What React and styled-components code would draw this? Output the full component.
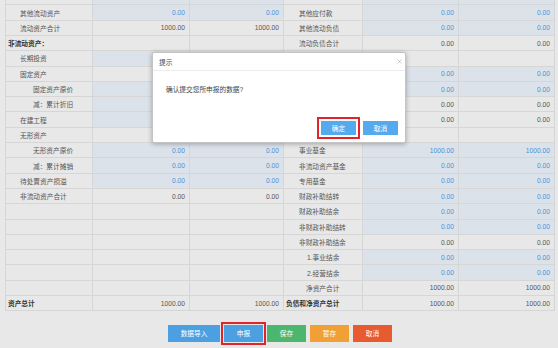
import React from 'react'
import styled, { createGlobalStyle } from 'styled-components'

const B = (v = '0.00') => ({ v, edit: true })
const G = (v = '') => ({ v, edit: false })

// [left label, left indent, bold, v1, v2, right label, right indent, bold, v3, v4]
const rows = [
  ['', 14, false, B(''), B(''), '', 15, false, B(''), B('')],
  ['其他流动资产', 14, false, B(), B(), '其他应付款', 15, false, B(), B()],
  ['流动资产合计', 14, false, G('1000.00'), G('1000.00'), '其他流动负债', 15, false, B(), B()],
  ['非流动资产：', 2, true, G(), G(), '流动负债合计', 15, false, G('0.00'), G('0.00')],
  ['长期投资', 14, false, B(''), B(''), '', 2, true, G(), G()],
  ['固定资产', 14, false, G(), G(), '', 15, false, B(), B()],
  ['固定资产原价', 27, false, B(''), B(''), '', 15, false, B(), B()],
  ['减：累计折旧', 27, false, B(''), B(''), '', 15, false, G('0.00'), G('0.00')],
  ['在建工程', 14, false, B(''), B(''), '', 15, false, G('0.00'), G('0.00')],
  ['无形资产', 14, false, G(), G(), '', 15, false, G(), G()],
  ['无形资产原价', 27, false, B(), B(), '事业基金', 15, false, B('1000.00'), B('1000.00')],
  ['减：累计摊销', 27, false, B(), B(), '非流动资产基金', 15, false, B(), B()],
  ['待处置资产损溢', 14, false, B(), B(), '专用基金', 15, false, B(), B()],
  ['非流动资产合计', 14, false, G('0.00'), G('0.00'), '财政补助结转', 15, false, B(), B()],
  ['', 14, false, G(), G(), '财政补助结余', 15, false, B(), B()],
  ['', 14, false, G(), G(), '非财政补助结转', 15, false, B(), B()],
  ['', 14, false, G(), G(), '非财政补助结余', 15, false, G('0.00'), G('0.00')],
  ['', 14, false, G(), G(), '1.事业结余', 23, false, B(), B()],
  ['', 14, false, G(), G(), '2.经营结余', 23, false, B(), B()],
  ['', 14, false, G(), G(), '净资产合计', 22, false, G('1000.00'), G('1000.00')],
  ['资产总计', 2, true, G('1000.00'), G('1000.00'), '负债和净资产总计', 2, true, G('1000.00'), G('1000.00')],
]

const buttons = [
  { text: '数据导入', color: '#4c9fe0', wide: true },
  { text: '申报', color: '#4c9fe0', marked: true },
  { text: '保存', color: '#4cb56e' },
  { text: '暂存', color: '#f0a035' },
  { text: '取消', color: '#e85b31' },
]

export default function App() {
  return (
    <>
      <Global />
      <Page>
        <Sheet>
          {rows.map((r, i) => (
            <React.Fragment key={i}>
              <Label indent={r[1]} bold={r[2]}>{r[0]}</Label>
              <Value edit={r[3].edit}>{r[3].v}</Value>
              <Value edit={r[4].edit}>{r[4].v}</Value>
              <Label indent={r[6]} bold={r[7]}>{r[5]}</Label>
              <Value edit={r[8].edit}>{r[8].v}</Value>
              <Value edit={r[9].edit}>{r[9].v}</Value>
            </React.Fragment>
          ))}
        </Sheet>

        <Footer>
          {buttons.map(b => (
            <Button key={b.text} color={b.color} wide={b.wide} marked={b.marked}>{b.text}</Button>
          ))}
        </Footer>

        <Dialog>
          <DialogHead>
            <span>提示</span>
            <Close viewBox="0 0 10 10">
              <path d="M1 1 L9 9 M9 1 L1 9" />
            </Close>
          </DialogHead>
          <DialogBody>确认提交您所申报的数据?</DialogBody>
          <DialogFoot>
            <DialogButton marked>确定</DialogButton>
            <DialogButton>取消</DialogButton>
          </DialogFoot>
        </Dialog>
      </Page>
    </>
  )
}

const Global = createGlobalStyle`
  html, body {
    margin: 0;
    padding: 0;
  }
  body {
    background: #e8e8e8;
    font-family: "Liberation Sans", "Noto Sans CJK SC", sans-serif;
  }
`

const Page = styled.div`
  position: relative;
  width: 558px;
  height: 348px;
  overflow: hidden;
  background: #e8e8e8;
`

const Sheet = styled.div`
  display: grid;
  grid-template-columns: 87px 97px 94px 79px 96px 96px;
  grid-auto-rows: 15.3px;
  margin: -9.9px 0 0 5px;
  width: max-content;
  border-left: 1px solid #d6d6d6;
`

const Cell = styled.div`
  box-sizing: border-box;
  display: flex;
  align-items: center;
  border-right: 1px solid #d6d6d6;
  border-bottom: 1px solid #d6d6d6;
  font-size: 6.7px;
  white-space: nowrap;
  overflow: hidden;
`

const Label = styled(Cell)`
  padding-left: ${p => p.indent}px;
  color: ${p => (p.bold ? '#333' : '#555')};
  font-weight: ${p => (p.bold ? 700 : 400)};
  background: #e8e8e8;
`

const Value = styled(Cell)`
  justify-content: flex-end;
  padding-right: 4px;
  background: ${p => (p.edit ? '#dce2ea' : '#e8e8e8')};
  color: ${p => (p.edit ? '#4a92d6' : '#555')};
`

const Footer = styled.div`
  display: flex;
  justify-content: center;
  gap: 4px;
  margin-top: 13.6px;
  padding-left: 2px;
`

const Button = styled.div`
  width: ${p => (p.wide ? '52px' : '39px')};
  height: 17px;
  display: flex;
  align-items: center;
  justify-content: center;
  background: ${p => p.color};
  color: #fff;
  font-size: 6.7px;
  outline: ${p => (p.marked ? '2px solid #e3232a' : 'none')};
  outline-offset: 1px;
`

const Dialog = styled.div`
  position: absolute;
  left: 152px;
  top: 52px;
  width: 254px;
  height: 91px;
  box-sizing: border-box;
  display: flex;
  flex-direction: column;
  background: #fff;
  border: 1px solid #c4c4c4;
  border-radius: 2px;
  box-shadow: 0 1px 5px rgba(0, 0, 0, 0.3);
`

const DialogHead = styled.div`
  height: 18px;
  flex: none;
  box-sizing: border-box;
  display: flex;
  align-items: center;
  justify-content: space-between;
  padding: 0 3px 0 6px;
  border-bottom: 1px solid #ececec;
  font-size: 6.7px;
  color: #444;
`

const Close = styled.svg`
  width: 5px;
  height: 5px;
  stroke: #999;
  stroke-width: 1;
  fill: none;
`

const DialogBody = styled.div`
  flex: 1;
  padding: 13px 0 0 13px;
  font-size: 6.7px;
  color: #444;
`

const DialogFoot = styled.div`
  display: flex;
  justify-content: flex-end;
  gap: 7px;
  padding: 0 7px 7px 0;
`

const DialogButton = styled.div`
  width: 35px;
  height: 14px;
  display: flex;
  align-items: center;
  justify-content: center;
  background: #55aaee;
  color: #fff;
  font-size: 6.7px;
  outline: ${p => (p.marked ? '2px solid #e3232a' : 'none')};
  outline-offset: 2px;
`
